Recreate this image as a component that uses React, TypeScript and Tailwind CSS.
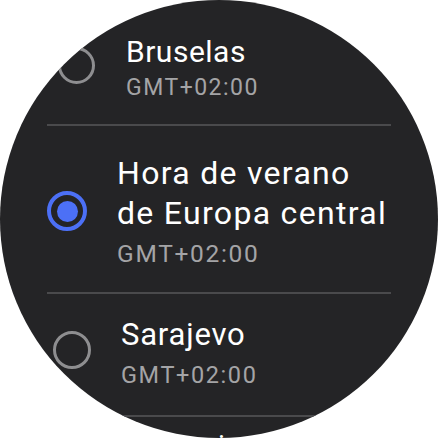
import React from "react"

type Zone = {
  name: string
  offset: string
}

function Radio({ checked, className }: { checked?: boolean; className: string }) {
  if (checked) {
    return (
      <span className={`flex shrink-0 items-center justify-center rounded-full border-[4px] border-[#4c70f6] ${className}`}>
        <span className="h-[21px] w-[21px] rounded-full bg-[#4c70f6]" />
      </span>
    )
  }
  return <span className={`shrink-0 rounded-full border-[3px] border-[#8e8e90] ${className}`} />
}

function Divider() {
  return <div className="ml-[47px] h-[2px] w-[344px] shrink-0 bg-[#4a4a4c]" />
}

const zones: Zone[] = [
  { name: "Bruselas", offset: "GMT+02:00" },
  { name: "Hora de verano de Europa central", offset: "GMT+02:00" },
  { name: "Sarajevo", offset: "GMT+02:00" },
  { name: "Varsovia", offset: "GMT+02:00" },
]

export default function App() {
  return (
    <div className="flex h-[438px] w-[438px] items-start bg-white font-[Roboto,sans-serif]">
      <div className="h-[438px] w-[438px] overflow-hidden rounded-full bg-[#242426]">
        <div className="flex flex-col">
          {/* top item, scaled down near the edge */}
          <div className="flex items-start pb-[21px] pl-[58px] pt-[34px]">
            <Radio className="mt-[13px] h-[37px] w-[37px]" />
            <div className="ml-[31px] flex flex-col">
              <span className="text-[30px] leading-[35px] tracking-[0.5px] text-white">{zones[0].name}</span>
              <span className="mt-[4px] text-[23px] leading-[30px] tracking-[1.5px] text-[#a4a4a6]">{zones[0].offset}</span>
            </div>
          </div>
          <Divider />

          {/* selected item */}
          <div className="flex items-center pb-[23px] pl-[47px] pt-[27px]">
            <Radio checked className="h-[40px] w-[40px]" />
            <div className="ml-[30px] flex flex-col">
              <span className="w-[290px] text-[32px] leading-[40px] tracking-[1.3px] text-white">
                Hora de verano
                <br />
                de Europa central
              </span>
              <span className="mt-[6px] text-[24.5px] leading-[30px] tracking-[1.7px] text-[#a4a4a6]">{zones[1].offset}</span>
            </div>
          </div>
          <Divider />

          <div className="flex items-start pb-[25px] pl-[53px] pt-[23px]">
            <Radio className="mt-[14px] h-[38px] w-[38px]" />
            <div className="ml-[30px] flex flex-col">
              <span className="text-[31px] leading-[36px] tracking-[0.8px] text-white">{zones[2].name}</span>
              <span className="mt-[7px] text-[23.5px] leading-[30px] tracking-[1.6px] text-[#a4a4a6]">{zones[2].offset}</span>
            </div>
          </div>
          <Divider />

          {/* next item, only the top of it shows at the rim */}
          <div className="flex items-start pl-[58px] pt-[12px]">
            <Radio className="mt-[12px] h-[37px] w-[37px]" />
            <div className="ml-[30px] flex flex-col">
              <span className="text-[28px] leading-[34px] tracking-[1.2px] text-white">{zones[3].name}</span>
              <span className="mt-[4px] text-[22px] leading-[30px] tracking-[2px] text-[#a4a4a6]">{zones[3].offset}</span>
            </div>
          </div>
        </div>
      </div>
    </div>
  )
}
